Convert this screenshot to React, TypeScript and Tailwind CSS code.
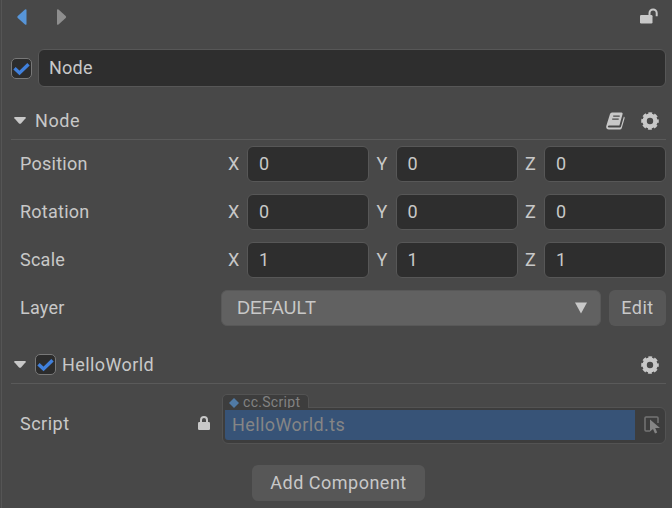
import React from "react";

type IconProps = { className?: string };

const Caret = () => (
  <svg className="w-3 h-[9px] shrink-0" viewBox="0 0 12 9" fill="#c8c8c8">
    <path d="M1 1h10q1.300.2.6 1.200L7 7.400q-1 .9-2 0L.4 2.200Q-.3 1.200 1 1z" />
  </svg>
);

const Gear = () => (
  <svg className="w-[18px] h-[18px] shrink-0" viewBox="0 0 18 18" fill="none" stroke="#c8c8c8">
    <circle cx="9" cy="9" r="5.400" strokeWidth="4.400" />
    <circle cx="9" cy="9" r="7.500" strokeWidth="2.600" strokeDasharray="3.700 2.190" strokeDashoffset="1.850" />
  </svg>
);

const Book = () => (
  <svg className="w-[19px] h-[18px] shrink-0" viewBox="0 0 19 18">
    <path d="M6 .5h9.500q1.500 0 1.100 1.500L13.400 13.400H3.200Q2 13.500 1.800 14.400q0 1 1.200 1h10.900q.8 0 1.100-.9L17.900 4.500q1 .6.700 1.800L15.800 16q-.5 1.500-2 1.500H2.800Q.2 17.500.2 14.800q0-.8.300-1.600L4 2Q4.500.5 6 .5z" fill="#c8c8c8" />
    <path d="M7.200 4.100h6.500M6.200 7.100h6.500" stroke="#4a4a4a" strokeWidth="1.200" />
  </svg>
);

const Lock = ({ className }: IconProps) => (
  <svg className={className} viewBox="0 0 12 14" fill="none">
    <path d="M3 7V4a3 3 0 0 1 6 0v3" stroke="#c8c8c8" strokeWidth="2" />
    <rect x="0" y="6" width="12" height="8" rx="1.200" fill="#c8c8c8" />
  </svg>
);

const OpenLock = () => (
  <svg className="w-[18px] h-4 shrink-0" viewBox="0 0 18 16" fill="none">
    <path d="M9.500 7.500V5a3.600 3.600 0 0 1 7.200 0v3.300" stroke="#c8c8c8" strokeWidth="2" />
    <rect x="0" y="7" width="12.500" height="8.500" rx="1.200" fill="#c8c8c8" />
  </svg>
);

const Check = () => (
  <span className="flex h-[21px] w-[21px] shrink-0 items-center justify-center rounded-[5px] border border-[#787878] bg-[#2c2c2c]">
    <svg className="h-[15px] w-[17px]" viewBox="0 0 17 15" fill="none" stroke="#4080dc" strokeWidth="3.400">
      <path d="M1.500 7.200l5 4.700L15.500 3.200" />
    </svg>
  </span>
);

const fields = [
  { label: "Position", value: "0" },
  { label: "Rotation", value: "0" },
  { label: "Scale", value: "1" },
];

const Field = ({ axis, value }: { axis: string; value: string }) => (
  <div className="flex items-center">
    <span className="w-[19px]">{axis}</span>
    <span className="flex h-9 w-[122px] items-center rounded-md border border-[#575757] bg-[#2e2e2e] pl-[11px]">{value}</span>
  </div>
);

export default function App() {
  return (
    <div className="h-[508px] w-[672px] overflow-hidden bg-[#484848] font-['Roboto',sans-serif] text-[18px] leading-6 tracking-[0.25px] text-[#c8c8c8]">
      <div className="ml-px flex h-[508px] flex-col border-l border-[#555] pr-[6px]">
        <div className="-ml-[2px] flex h-full flex-col">
          <div className="flex h-[49px] items-start pl-[17px] pt-2">
            <svg className="h-[18px] w-[50px]" viewBox="0 0 50 18">
              <path d="M8 1.500q1-.8 1.500.2v14.600q-.5 1-1.500.2L.8 10q-1-1 0-2z" fill="#5795d8" />
              <path d="M41.500 1.500q-1-.8-1.500.2v14.600q.5 1 1.500.2L48.700 10q1-1 0-2z" fill="#8e8e8e" />
            </svg>
            <span className="ml-auto mr-2"><OpenLock /></span>
          </div>
          <div className="flex h-[38px] items-center pl-[11px]">
            <Check />
            <div className="ml-[6px] flex h-[38px] flex-1 items-center rounded-md border border-[#575757] bg-[#2e2e2e] pl-[10px]">Node</div>
          </div>
          <div className="ml-[11px] mt-[15px] flex h-[38px] items-center border-b border-[#5a5a5a] pl-[3px] pr-[7px]">
            <Caret />
            <span className="ml-[9px] tracking-[0.6px]">Node</span>
            <span className="ml-auto mr-[16px]"><Book /></span>
            <Gear />
          </div>
          <div className="mt-[6px] flex flex-col gap-3">
            {fields.map((f) => (
              <div key={f.label} className="flex h-9 items-center pl-5">
                <span className="w-[208px]">{f.label}</span>
                <div className="flex flex-1 justify-between">
                  <Field axis="X" value={f.value} />
                  <Field axis="Y" value={f.value} />
                  <Field axis="Z" value={f.value} />
                </div>
              </div>
            ))}
          </div>
          <div className="mt-3 flex h-9 items-center pl-5">
            <span className="w-[201px]">Layer</span>
            <div className="flex h-9 flex-1 items-center rounded-md border border-[#585858] bg-[#616161] pl-[15px] pr-[13px] font-['Liberation_Sans',sans-serif] text-[18px] tracking-[-0.1px]">
              DEFAULT
              <svg className="ml-auto h-3 w-3" viewBox="0 0 12 12" fill="#c8c8c8"><path d="M0 .5h12L6 11.500z" /></svg>
            </div>
            <button className="ml-2 h-9 w-[57px] rounded-md bg-[#575757] tracking-[0.5px]">Edit</button>
          </div>
          <div className="ml-[11px] mt-5 flex h-[38px] items-center border-b border-[#5a5a5a] pl-[3px] pr-[7px]">
            <Caret />
            <span className="ml-[9px]"><Check /></span>
            <span className="ml-[6px] tracking-[0.4px]">HelloWorld</span>
            <span className="ml-auto"><Gear /></span>
          </div>
          <div className="mt-[10px] flex h-[50px] pl-5">
            <span className="mt-[18px] w-[178px] tracking-[0.5px]">Script</span>
            <Lock className="mt-[22px] h-[14px] w-3" />
            <div className="ml-3 flex flex-1 flex-col">
              <div className="z-10 -mb-px flex h-[14px] w-[87px] items-start gap-1 overflow-hidden rounded-t-[5px] border border-b-0 border-[#535353] bg-[#3d3d3d] pl-[6px] text-[14px] leading-[16px] tracking-[0.3px] text-[#828282]">
                <svg className="mt-[3px] h-[10px] w-[10px] shrink-0" viewBox="0 0 10 10" fill="#507aa5"><path d="M5 0l5 5-5 5-5-5z" /></svg>
                <span className="-mt-px">cc.Script</span>
              </div>
              <div className="flex h-[37px] items-center rounded-md rounded-tl-none border border-[#535353] bg-[#3d3d3d] pb-px pl-[2px]">
                <div className="flex h-[30px] w-[410px] items-center rounded-bl-[3px] bg-[#375377] pl-[7px] tracking-[0.4px] text-[#858585]">HelloWorld.ts</div>
                <svg className="ml-[9px] h-[18px] w-4" viewBox="0 0 16 18" fill="none">
                  <path d="M6 15H2Q1 15 1 14V2Q1 1 2 1H13Q14 1 14 2V7" stroke="#747474" strokeWidth="1.500" />
                  <path d="M6 3.500v12l3-2.500 2 4.500 2.200-1-2-4.500H16z" fill="#858585" />
                </svg>
              </div>
            </div>
          </div>
          <button className="ml-[252px] mt-[21px] h-9 w-[173px] rounded-md bg-[#575757] tracking-[0.5px]">Add Component</button>
        </div>
      </div>
    </div>
  );
}
